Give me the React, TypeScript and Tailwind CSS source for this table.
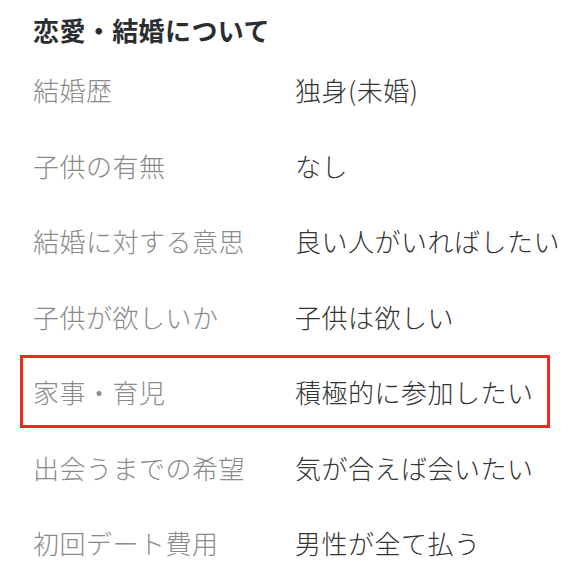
import React from "react";

const rows: { label: string; value: string; hl?: boolean }[] = [
  { label: "結婚歴", value: "独身(未婚)" },
  { label: "子供の有無", value: "なし" },
  { label: "結婚に対する意思", value: "良い人がいればしたい" },
  { label: "子供が欲しいか", value: "子供は欲しい" },
  { label: "家事・育児", value: "積極的に参加したい", hl: true },
  { label: "出会うまでの希望", value: "気が合えば会いたい" },
  { label: "初回デート費用", value: "男性が全て払う" },
];

export default function App() {
  return (
    <div
      className="w-[570px] h-[572px] bg-white overflow-hidden"
      style={{ fontFamily: '"Noto Sans CJK JP", "Noto Sans", sans-serif' }}
    >
      <div className="h-[52px] pl-[33px] pt-[12px] text-[26px] leading-[36px] font-bold tracking-[0.4px] text-[#2b2e31] whitespace-nowrap">
        恋愛・結婚について
      </div>
      <div className="pl-[20px] w-[550px]">
        {rows.map((r) =>
          r.hl ? (
            <div key={r.label} className="h-[75.5px] flex items-center">
              <div className="h-[73px] w-full flex items-center border-[3px] border-[#ea2a1e] pl-[10px]">
                <div className="w-[262px] shrink-0 text-[26px] tracking-[0.5px] font-light text-[#8a8a8a] whitespace-nowrap">{r.label}</div>
                <div className="text-[26px] tracking-[0.5px] font-light text-[#333] whitespace-nowrap">{r.value}</div>
              </div>
            </div>
          ) : (
            <div key={r.label} className="h-[75.5px] flex items-center pl-[13px]">
              <div className="w-[262px] shrink-0 text-[26px] tracking-[0.5px] font-light text-[#8a8a8a] whitespace-nowrap">{r.label}</div>
              <div className="text-[26px] tracking-[0.5px] font-light text-[#333] whitespace-nowrap">{r.value}</div>
            </div>
          )
        )}
      </div>
    </div>
  );
}
